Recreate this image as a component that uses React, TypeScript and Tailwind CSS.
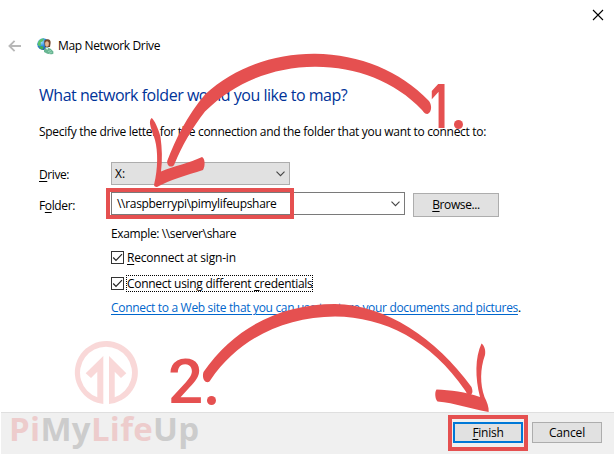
import type { ReactNode } from "react";

const RED = "#e55050";

function CloseIcon() {
  return (
    <svg width="12" height="12" viewBox="0 0 12 12" fill="none" stroke="#000" strokeWidth="1.1">
      <path d="M1 1 11 11M11 1 1 11" />
    </svg>
  );
}

function BackIcon() {
  return (
    <svg width="14" height="12" viewBox="0 0 14 12" fill="none" stroke="#b8b8b8" strokeWidth="1.8">
      <path d="M13 6H1.5M6.6.8 1.4 6l5.200 5.200" />
    </svg>
  );
}

function NetworkDriveIcon() {
  return (
    <svg width="17" height="17" viewBox="0 0 17 17">
      <defs>
        <radialGradient id="globe" cx="0.35" cy="0.3" r="0.75">
          <stop offset="0" stopColor="#9fe0ff" />
          <stop offset="0.5" stopColor="#2a8be0" />
          <stop offset="1" stopColor="#1440a8" />
        </radialGradient>
      </defs>
      <circle cx="6.2" cy="6.2" r="5.9" fill="url(#globe)" />
      <path d="M2 2.5Q4 .4 7 .6L6 3 3.5 4.5 4 7 2 8.5.4 6Z" fill="#5cc46a" />
      <path d="M4 8 6.5 8.8 6 11.8Q3.4 11.4 2 9.6Z" fill="#3fae52" />
      <path d="M7.2 4Q7.4 1 10.6 1.2 13.9 1.4 13.6 5L13 9H8Z" fill="#70452c" />
      <ellipse cx="10" cy="6" rx="1.9" ry="2.8" fill="#e5b793" />
      <path d="M7 14V12.5Q7.500 9.300 10 9.300 14 10 16.400 13.500V15.800Q12 17.500 7 14Z" fill="#68b592" />
      <path d="m8.500 9.500 1.600 2.500L11.500 9.700Z" fill="#eef5ee" />
      <path d="M11 13.5 14 12.500M12 15.500l3-1.500" stroke="#a2dcc2" strokeWidth="0.8" />
    </svg>
  );
}

function Chevron() {
  return (
    <svg width="9" height="6" viewBox="0 0 9 6" fill="none" stroke="#444" strokeWidth="1.1">
      <path d="M.5.7 4.5 4.7 8.5.7" />
    </svg>
  );
}

function CheckBox() {
  return (
    <span className="flex size-[13px] shrink-0 items-center justify-center border border-[#333] bg-white">
      <svg width="11" height="11" viewBox="0 0 11 11" fill="none" stroke="#222" strokeWidth="1.2">
        <path d="M1.2 5.5 4 8.3 10 2.2" />
      </svg>
    </span>
  );
}

function Key({ children }: { children: ReactNode }) {
  return <span className="underline decoration-1 underline-offset-2">{children}</span>;
}

function Watermark() {
  return (
    <div className="absolute left-[9px] top-[340px] h-[114px] w-[200px] opacity-[0.22]">
      <svg className="absolute left-[65px] top-0" width="66" height="66" viewBox="74 340 66 66">
        <path
          d="M97.3 402.7A31.5 31.5 0 1 1 114.7 402.9L109 403.9V356L126.3 373.2 121 378 114.7 371.8V397.2A26 26 0 1 0 97.3 397.2V371.8L91 378 85.7 373.2 103.3 356V403.9Z"
          fill={RED}
        />
      </svg>
      <div className="absolute left-0 top-[65px] font-['Open_Sans'] text-[33px] font-bold leading-[48px] tracking-[0.3px] text-[#505050]">
        <span className="text-[#e55050]">Pi</span>My<span className="text-[#e55050]">Life</span>Up
      </div>
    </div>
  );
}

function Annotations() {
  return (
    <div className="absolute inset-0 text-[#e55050]">
      <svg width="614" height="454" viewBox="0 0 614 454" fill={RED}>
        <path d="M167.2 161C176 138 187 116 205 94.5C235 67 275 53.5 315 53.8C360 54.5 400 71 429 101C432 105 432 112 427.5 114C425 114 424 112.500 422 110C395 81 355 66.5 315 66.7C273 67 235 82 205 111.500C192 128 182 146 174.500 164C173 168.500 166.500 167 167.200 161Z" />
        <path d="M151.500 118C154 119 159 130 160.500 137C162 148 162.500 160 161 171.500C174 166 190 163 202 157C205 158 205.500 166 203 170C187 175 170 180 157 187C155 187 153.500 186 154.200 184C158 169 158 151 155 140C152 130 147.500 122 151.500 118Z" />
        <path d="M203.500 372C235 326 283 304 335 304C386 305 436 338 471.500 387C473 391 473 394 469.500 395.500C467.500 395 466.500 393 465.500 391C431 340 384 317 335 316.500C285 317 239 338 210.500 380C209 383 206 383 204 380C203 378 202.500 375 203.500 372Z" />
        <path d="M436.500 389.500C450 390 466 392 480 397C475 378 475 357 481.500 343.500C484 345 486 350 485 355C480 369 480 384 484.500 397C487 402 489 407 488.700 412C471 409 455 403 437.500 401.500C435 399 434.500 392 436.500 389.500Z" />
        <circle cx="458.500" cy="124.500" r="4.500" />
        <circle cx="211.500" cy="400.500" r="4.500" />
      </svg>
      <span className="absolute left-[430px] top-[76px] origin-left scale-x-[0.65] font-['Inter'] text-[61px] font-bold leading-[60px]">1</span>
      <span className="absolute left-[168px] top-[352px] font-['Roboto'] text-[62px] font-medium leading-[60px]">2</span>
      <div className="absolute left-[106px] top-[188px] h-[31px] w-[188px] border-4 border-[#e55050]" />
      <div className="absolute left-[448px] top-[415px] h-[36px] w-[80px] border-4 border-[#e55050]" />
    </div>
  );
}

export default function App() {
  return (
    <div className="relative flex h-[454px] w-[614px] flex-col overflow-hidden whitespace-nowrap bg-white font-['Open_Sans','Noto_Sans',sans-serif] text-[12px] leading-4 text-black">
      <header className="flex h-[30px] shrink-0 items-center justify-end pr-[10px]">
        <CloseIcon />
      </header>
      <div className="flex h-8 shrink-0 items-center pl-2">
        <BackIcon />
        <div className="ml-[15px] flex items-center gap-1">
          <NetworkDriveIcon />
          <span className="tracking-[-0.36px]">Map Network Drive</span>
        </div>
      </div>
      <main className="flex h-[350px] shrink-0 flex-col pl-[39px]">
        <h1 className="mt-[23px] text-[16px] leading-5 tracking-[-0.48px] text-[#003399]">
          What network folder would you like to map?
        </h1>
        <p className="mt-[19px] tracking-[-0.305px]">
          Specify the drive letter for the connection and the folder that you want to connect to:
        </p>
        <div className="mt-[22px] flex h-[23px]">
          <label className="w-[72px] pt-[5px] tracking-[-0.42px]">
            <Key>D</Key>rive:
          </label>
          <div className="flex w-[179px] items-center justify-between border border-[#adadad] bg-[#e1e1e1] pl-[3px] pr-[4px]">
            <span>X:</span>
            <Chevron />
          </div>
        </div>
        <div className="mt-[7px] flex h-[24px]">
          <label className="w-[72px] pt-[6px] tracking-[-0.37px]">
            F<Key>o</Key>lder:
          </label>
          <div className="flex h-[23px] w-[294px] items-center justify-between border border-[#7a7a7a] bg-white pl-[5px] pr-[4px]">
            <span className="tracking-[-0.31px]">\\raspberrypi\pimylifeupshare</span>
            <Chevron />
          </div>
          <button className="ml-2 mt-px h-6 w-[86px] shrink-0 border border-[#adadad] bg-[#e1e1e1] tracking-[-0.4px]">
            <Key>B</Key>rowse...
          </button>
        </div>
        <div className="flex flex-col pl-[72px]">
          <p className="mt-[10px] tracking-[-0.37px]">Example: \\server\share</p>
          <div className="mt-[7px] flex h-[17px] items-center gap-[3px]">
            <CheckBox />
            <span className="tracking-[-0.19px]">
              <Key>R</Key>econnect at sign-in
            </span>
          </div>
          <div className="mt-[9px] flex h-[17px] items-center gap-0.5">
            <CheckBox />
            <span className="h-[17px] w-[187px] border border-dotted border-black leading-[15px] tracking-[-0.29px]">
              Connect using different <Key>c</Key>redentials
            </span>
          </div>
          <p className="mt-2 tracking-[-0.32px]">
            <a className="text-[#0066cc] underline decoration-1 underline-offset-2">
              Connect to a Web site that you can use to store your documents and pictures
            </a>
            .
          </p>
        </div>
      </main>
      <footer className="ml-px flex h-[42px] shrink-0 items-start justify-end gap-[9px] border-t border-[#dfdfdf] bg-[#f0f0f0] pr-[11px] pt-[9px]">
        <button className="h-[21px] w-[70px] border-2 border-[#0078d7] bg-[#e1e1e1] leading-4 tracking-[-0.25px]">
          <Key>F</Key>inish
        </button>
        <button className="mr-px h-[21px] w-[70px] border border-[#adadad] bg-[#e1e1e1] leading-4 tracking-[-0.18px]">
          Cancel
        </button>
      </footer>
      <Watermark />
      <Annotations />
    </div>
  );
}
